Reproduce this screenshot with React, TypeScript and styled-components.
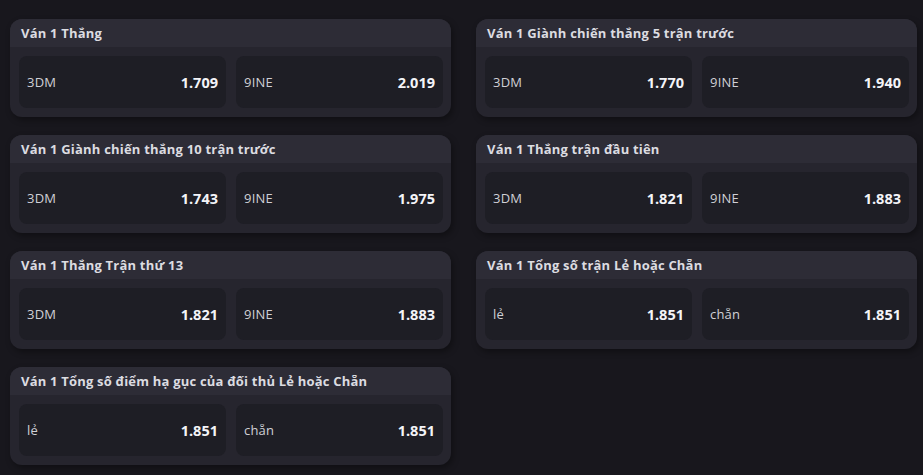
import { createGlobalStyle, styled } from "styled-components";

const GlobalStyle = createGlobalStyle`
    html, body {
        margin: 0;
        padding: 0;
        background: #18171d;
    }
    body {
        font-family: "Open Sans", "Noto Sans", "Liberation Sans", sans-serif;
        -webkit-font-smoothing: antialiased;
    }
`

const Page = styled.div`
    width: 923px;
    height: 475px;
    box-sizing: border-box;
    padding: 19px 6px 0 10px;
    background: #18171d;
    overflow: hidden;

    display: grid;
    grid-template-columns: 441px 441px;
    grid-auto-rows: 98px;
    column-gap: 25px;
    row-gap: 18px;
    align-content: start;
`

const Card = styled.div`
    background: #26252e;
    border-radius: 12px;
    overflow: hidden;
    box-shadow: 2px 3px 6px rgba(0, 0, 0, 0.35);

    display: flex;
    flex-direction: column;
`

const CardHeader = styled.div`
    background: #2d2c36;
    height: 28px;
    padding: 0 11px;

    display: flex;
    align-items: center;

    color: #dcdce1;
    font-size: 13px;
    font-weight: 700;
    letter-spacing: 0.2px;
    white-space: nowrap;
`

const Options = styled.div`
    flex: 1;
    padding: 9px 8px 9px 9px;

    display: grid;
    grid-template-columns: 1fr 1fr;
    column-gap: 10px;
`

const Option = styled.div`
    background: #1e1e25;
    border-radius: 8px;
    padding: 0 8px 0 8px;

    display: flex;
    align-items: center;
    justify-content: space-between;
`

const Label = styled.span`
    color: #d0d0d6;
    font-size: 13px;
    font-weight: 400;
    letter-spacing: 0.2px;
`

const Odds = styled.span`
    color: #f4f4f8;
    font-size: 14.5px;
    font-weight: 700;
`

type Market = {
    title: string;
    options: [string, string][];
}

const markets: Market[] = [
    { title: "Ván 1 Thắng", options: [["3DM", "1.709"], ["9INE", "2.019"]] },
    { title: "Ván 1 Giành chiến thắng 5 trận trước", options: [["3DM", "1.770"], ["9INE", "1.940"]] },
    { title: "Ván 1 Giành chiến thắng 10 trận trước", options: [["3DM", "1.743"], ["9INE", "1.975"]] },
    { title: "Ván 1 Thắng trận đầu tiên", options: [["3DM", "1.821"], ["9INE", "1.883"]] },
    { title: "Ván 1 Thắng Trận thứ 13", options: [["3DM", "1.821"], ["9INE", "1.883"]] },
    { title: "Ván 1 Tổng số trận Lẻ hoặc Chẵn", options: [["lẻ", "1.851"], ["chẵn", "1.851"]] },
    { title: "Ván 1 Tổng số điểm hạ gục của đối thủ Lẻ hoặc Chẵn", options: [["lẻ", "1.851"], ["chẵn", "1.851"]] },
]

const App = () => {
    return (
        <>
            <GlobalStyle />
            <Page>
                {markets.map(market => (
                    <Card key={market.title}>
                        <CardHeader>{market.title}</CardHeader>
                        <Options>
                            {market.options.map(([label, odds]) => (
                                <Option key={label}>
                                    <Label>{label}</Label>
                                    <Odds>{odds}</Odds>
                                </Option>
                            ))}
                        </Options>
                    </Card>
                ))}
            </Page>
        </>
    );
}

export default App;
